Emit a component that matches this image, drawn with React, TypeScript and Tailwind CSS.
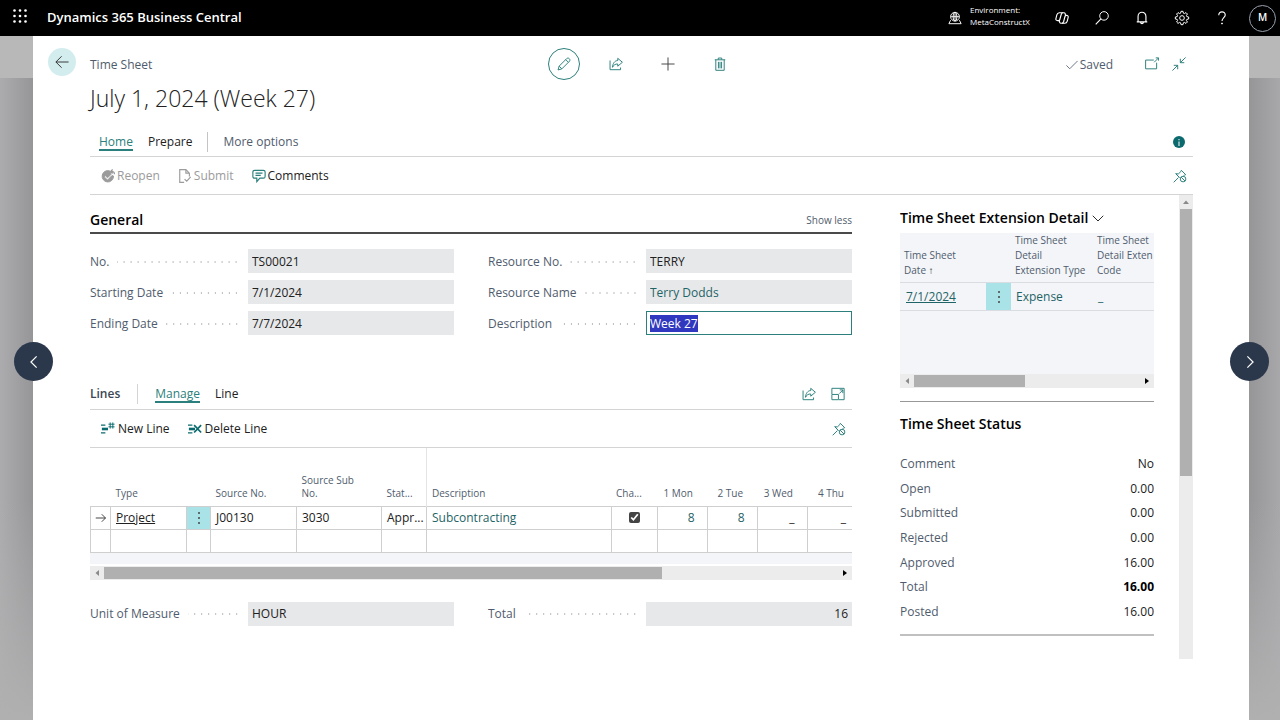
import React, { useEffect, useRef } from 'react'
import clsx from 'clsx'

type IconProps = { className?: string; size?: number; box?: string; children: React.ReactNode }

const Icon = ({ className, size = 14, box = '0 0 16 16', children }: IconProps) => (
    <svg
        width={size}
        height={size}
        viewBox={box}
        fill="none"
        stroke="currentColor"
        strokeWidth="1.1"
        className={clsx('shrink-0', className)}
        aria-hidden="true"
    >
        {children}
    </svg>
)

const ShareIcon = ({ size = 14 }: { size?: number }) => (
    <Icon size={size}>
        <path d="M1.200 4v10.500h12V12" />
        <path d="M10 1.500 15.300 6 10 10.500V8C7.500 7.800 5.200 9 4 11.800c.3-4.500 2.400-7.500 6-7.800z" strokeLinejoin="round" />
    </Icon>
)

const PinIcon = () => (
    <Icon>
        <path d="m9.500 1.500 5 5-1.500.6-1.300 1.200M9.500 1.500l-.6 1.500-2.700 2.600-3-.2L7 9.400M.8 15.200 6.200 9.800M3.200 5.400l4.300 4.500" />
        <circle cx="11.500" cy="11.500" r="3.200" />
        <path d="m9.300 9.300 4.400 4.400" />
    </Icon>
)

const Waffle = () => (
    <svg width="14" height="14" viewBox="0 0 14 14" fill="currentColor" aria-hidden="true">
        {[1.500, 7, 12.500].map(y => [1.500, 7, 12.500].map(x => <circle key={`${x}-${y}`} cx={x} cy={y} r="1.300" />))}
    </svg>
)

const TopBar = () => (
    <header className="flex h-9 shrink-0 items-center bg-black pr-1 pl-[13px] text-white">
        <button aria-label="App launcher" className="pb-1"><Waffle /></button>
        <h2 className="ml-5 flex-1 text-[13px] font-semibold">Dynamics 365 Business Central</h2>
        <Icon size={14} className="mr-2">
            <circle cx="8" cy="6.500" r="5" />
            <ellipse cx="8" cy="6.500" rx="2.200" ry="5" />
            <path d="M3 6.500h10M8 1.500v10M3 10.500 1 14.500h14l-2-4" />
        </Icon>
        <p className="w-[72px] pb-1 text-[8px] leading-3 font-medium">Environment:<br />MetaConstructX</p>
        <button aria-label="Copilot" className="grid w-10 place-items-center">
            <Icon>
                <path d="M6 2h4.200c.8 0 1.200.4 1.500 1.200L12 5h1.200c1.500 0 2.200 1 1.800 2.500l-1 4c-.4 1.600-1.300 2.500-2.800 2.500H6.800c-.8 0-1.200-.4-1.500-1.200L4.800 11H3C1.400 11 .7 10 1.100 8.500l1-4C2.500 2.900 3.400 2 5 2z" strokeWidth="1.300" />
                <path d="M9 2c-1 0-1.500.7-1.800 1.700L5.400 10c-.2.700-.7 1-1.400 1M8 14c1 0 1.500-.7 1.800-1.700L11.500 6c.2-.7.6-1 1.300-1" strokeWidth="1.300" />
            </Icon>
        </button>
        <button aria-label="Search" className="grid w-10 place-items-center">
            <Icon><circle cx="10.300" cy="5.600" r="4.900" /><path d="M6.800 9.100.8 15.200" strokeWidth="1.300" /></Icon>
        </button>
        <button aria-label="Notifications" className="grid w-10 place-items-center">
            <Icon><path d="M2 12.500h12M3.500 12.500V6.200a4.500 4.800 0 0 1 9 0v6.300M6.300 12.700c.2 1.300.8 1.800 1.700 1.800s1.500-.5 1.700-1.800" strokeWidth="1.300" /></Icon>
        </button>
        <button aria-label="Settings" className="grid w-10 place-items-center">
            <Icon size={16} box="0 0 24 24">
                <g strokeWidth="1.500">
                    <circle cx="12" cy="12" r="3.500" />
                    <path d="M10.500 2h3l.6 2.800 1.500.6L18 3.900 20.100 6l-1.500 2.400.6 1.500 2.800.6v3l-2.800.6-.6 1.500 1.500 2.400-2.100 2.100-2.400-1.500-1.500.6-.6 2.800h-3l-.6-2.800-1.500-.6L6 20.100 3.900 18l1.500-2.400-.6-1.500L2 13.500v-3l2.800-.6.6-1.500L3.900 6 6 3.900l2.400 1.500 1.500-.6z" />
                </g>
            </Icon>
        </button>
        <button aria-label="Help" className="grid w-10 place-items-center">
            <Icon><path d="M4.300 4.800C4.300 2.400 5.900 1 8 1s3.700 1.300 3.700 3.500C11.700 7.500 8 7.600 8 11.500" strokeWidth="1.300" /><circle cx="8" cy="14.300" r=".6" fill="currentColor" /></Icon>
        </button>
        <button className="ml-[7px] grid size-[27px] place-items-center rounded-full border border-gray-400 text-[10px] font-semibold">M</button>
    </header>
)

type FieldProps = {
    id: string
    label: string
    value: string
    inputClass?: string
    inputRef?: React.Ref<HTMLInputElement>
}

const Field = ({ id, label, value, inputClass, inputRef }: FieldProps) => (
    <div className="flex h-6 items-center">
        <label htmlFor={id} className="flex w-[158px] shrink-0 items-center gap-2 pt-px pr-2 whitespace-nowrap text-[#505c6d]">
            {label}
            <span className="h-[2px] flex-1 bg-[radial-gradient(circle,#bbbbbb_1px,transparent_1px)] bg-[length:7px_2px] bg-right" />
        </label>
        <input
            id={id}
            ref={inputRef}
            readOnly={!inputRef}
            defaultValue={value}
            className={clsx(
                'h-6 w-full min-w-0 px-1 outline-none selection:bg-[#3038c0] selection:text-white',
                inputRef ? 'border border-[#2b7f7c] bg-white px-[3px]' : 'bg-[#e7e8ea]',
                inputClass ?? 'text-[#212121]'
            )}
        />
    </div>
)

type TabProps = { active?: boolean; muted?: boolean; children: React.ReactNode }

const Tab = ({ active, muted, children }: TabProps) => (
    <button
        className={clsx(
            'border-b-2 pt-px leading-[15px]',
            active ? 'border-[#2b7f7c] text-[#2b7f7c]' : 'border-transparent',
            !active && (muted ? 'text-[#505c6d]' : 'text-[#212121]')
        )}
    >
        {children}
    </button>
)

// Horizontal scrollbar, thumb width in percent of the track
const HScroll = ({ thumb }: { thumb: number }) => (
    <div className="flex h-[14px] items-center bg-[#ececec]">
        <svg width="14" height="14" viewBox="0 0 14 14" className="shrink-0 fill-[#8a8a8a]" aria-hidden="true"><path d="M9 4v6L5.500 7z" /></svg>
        <div className="h-3 flex-1"><div className="h-full bg-[#b0b0b0]" style={{ width: `${thumb}%` }} /></div>
        <svg width="14" height="14" viewBox="0 0 14 14" className="shrink-0 fill-black" aria-hidden="true"><path d="M5 4v6l4-3z" /></svg>
    </div>
)

const MoreDots = () => (
    <button aria-label="More" className="grid h-full w-full place-items-center bg-[#a9e3e8] text-[#444]">
        <svg width="2" height="12" viewBox="0 0 2 12" fill="currentColor" aria-hidden="true">
            <circle cx="1" cy="1" r="1" /><circle cx="1" cy="6" r="1" /><circle cx="1" cy="11" r="1" />
        </svg>
    </button>
)

const LinesTable = () => (
    <table className="w-full table-fixed border-collapse text-left">
        <colgroup>
            <col className="w-5" />
            <col className="w-[76px]" />
            <col className="w-6" />
            <col className="w-[86px]" />
            <col className="w-[85px]" />
            <col className="w-[45px]" />
            <col />
            <col className="w-[46px]" />
            <col className="w-[50px]" />
            <col className="w-[50px]" />
            <col className="w-[50px]" />
            <col className="w-[45px]" />
        </colgroup>
        <thead>
            <tr className="h-[58px] align-bottom text-[10px] leading-[13px] whitespace-nowrap text-[#505c6d] [&>th]:pb-[6px] [&>th]:font-normal">
                <th />
                <th className="pl-[5px]">Type</th>
                <th />
                <th className="pl-[5px]">Source No.</th>
                <th className="pl-[5px]">Source Sub<br />No.</th>
                <th className="border-r border-[#e4e4e4] pl-[5px]">Stat...</th>
                <th className="pl-[5px]">Description</th>
                <th className="pl-[5px]">Cha...</th>
                <th className="pr-[14px] text-right">1 Mon</th>
                <th className="pr-[14px] text-right">2 Tue</th>
                <th className="pr-[14px] text-right">3 Wed</th>
                <th className="pr-2 text-right">4 Thu</th>
            </tr>
        </thead>
        <tbody className="text-[#212121] [&_td]:h-[23px] [&_td]:border [&_td]:border-[#cfcfcf] [&_td]:p-0 [&_td:last-child]:border-r-0">
            <tr>
                <td>
                    <Icon className="mx-auto" size={12}><path d="M1 8h13M9 3l5 5-5 5" /></Icon>
                </td>
                <td><a href="#" className="pl-[5px] underline">Project</a></td>
                <td><div className="h-[22px]"><MoreDots /></div></td>
                <td><span className="pl-[5px]">J00130</span></td>
                <td><span className="pl-[5px]">3030</span></td>
                <td><span className="pl-[5px]">Appr...</span></td>
                <td><a href="#" className="pl-[5px] text-[#1f6466]">Subcontracting</a></td>
                <td>
                    <input
                        type="checkbox"
                        aria-label="Chargeable"
                        defaultChecked
                        className="mx-auto block size-[11px] accent-[#444444]"
                    />
                </td>
                <td className="text-right text-[#1f6466]"><span className="pr-3">8</span></td>
                <td className="text-right text-[#1f6466]"><span className="pr-3">8</span></td>
                <td className="text-right"><span className="pr-3">_</span></td>
                <td className="text-right"><span className="pr-[6px]">_</span></td>
            </tr>
            <tr>
                {Array.from({ length: 12 }, (_, i) => <td key={i} />)}
            </tr>
        </tbody>
    </table>
)

const statusRows = [
    { label: 'Comment', value: 'No' },
    { label: 'Open', value: '0.00' },
    { label: 'Submitted', value: '0.00' },
    { label: 'Rejected', value: '0.00' },
    { label: 'Approved', value: '16.00' },
    { label: 'Total', value: '16.00', bold: true },
    { label: 'Posted', value: '16.00' },
]

const FactBox = () => (
    <aside className="w-[254px] shrink-0 text-[#212121]">
        <h2 className="flex h-[38px] items-center gap-1 pt-[7px] text-sm font-semibold whitespace-nowrap text-black">
            Time Sheet Extension Detail
            <Icon size={12}><path d="m1 5 7 7 7-7" /></Icon>
        </h2>
        <div className="bg-[#f3f5f9]">
            <div className="h-[141px]">
                <table className="w-full table-fixed border-collapse text-left">
                    <colgroup>
                        <col className="w-[86px]" />
                        <col className="w-[25px]" />
                        <col className="w-[82px]" />
                        <col />
                    </colgroup>
                    <thead>
                        <tr className="h-12 align-bottom text-[10px] leading-[15px] whitespace-nowrap text-[#505c6d] [&>th]:p-0 [&>th]:pb-[4px] [&>th]:pl-1 [&>th]:font-normal">
                            <th>Time Sheet<br />Date <span className="font-bold text-[#212121]">↑</span></th>
                            <th />
                            <th>Time Sheet<br />Detail<br />Extension Type</th>
                            <th>Time Sheet<br />Detail Exten<br />Code</th>
                        </tr>
                    </thead>
                    <tbody>
                        <tr className="h-7 border-y border-[#d9dde2] text-[#1f6466]">
                            <td className="pl-[6px]"><a href="#" className="underline">7/1/2024</a></td>
                            <td className="p-0"><div className="h-[27px]"><MoreDots /></div></td>
                            <td className="pl-[5px]">Expense</td>
                            <td className="pl-[5px]">_</td>
                        </tr>
                    </tbody>
                </table>
            </div>
            <HScroll thumb={49} />
        </div>
        <h2 className="mt-[13px] flex h-[43px] items-center border-t border-[#989898] pt-[2px] text-sm font-semibold text-black">Time Sheet Status</h2>
        <dl className="mt-2 grid h-[172px] grid-rows-7">
            {statusRows.map(row => (
                <div key={row.label} className="flex items-center justify-between">
                    <dt className="text-[#505c6d]">{row.label}</dt>
                    <dd className={clsx(row.bold && 'font-bold text-black')}>{row.value}</dd>
                </div>
            ))}
        </dl>
        <hr className="mt-[10px] border-t-2 border-[#c0c0c0]" />
    </aside>
)

const App = () => {
    const descriptionRef = useRef<HTMLInputElement>(null)

    // The description opens focused with its text selected
    useEffect(() => {
        descriptionRef.current?.focus()
        descriptionRef.current?.select()
    }, [])

    return (
        <div className="flex min-h-screen flex-col bg-[#a5a5a9] font-['Open_Sans',sans-serif] text-xs">
            <TopBar />
            <main className="relative flex flex-1 bg-[linear-gradient(#b8b8b8_42px,transparent_42px),linear-gradient(to_top,#b0b0b1,transparent_220px),linear-gradient(to_right,#acacae,#969698_33px,#969698_calc(100%-31px),#a8a8ab)] pr-[31px] pl-[33px]">
                <button aria-label="Previous" className="absolute top-[306px] left-[14px] grid size-[39px] place-items-center rounded-full bg-[#2b384c] text-white">
                    <Icon><path d="M11 1.500 4.500 8l6.500 6.500" strokeWidth="1.400" /></Icon>
                </button>
                <button aria-label="Next" className="absolute top-[306px] right-[11px] grid size-[39px] place-items-center rounded-full bg-[#2b384c] text-white">
                    <Icon><path d="M5 1.500 11.500 8 5 14.500" strokeWidth="1.400" /></Icon>
                </button>

                <section className="flex min-w-0 flex-1 bg-white pt-3 pr-14 pl-[15px]">
                    <div className="w-[42px] shrink-0">
                        <button aria-label="Back" className="grid size-7 place-items-center rounded-full bg-[#d3edef] text-[#333]">
                            <Icon><path d="M15.500 8H1M7.500 1.500 1 8l6.500 6.500" /></Icon>
                        </button>
                    </div>

                    <div className="min-w-0 flex-1">
                        <div className="flex h-8 items-center text-[#2b7f7c]">
                            <span className="flex-1 pt-px text-[#505c6d]">Time Sheet</span>
                            <div className="flex gap-5">
                                <button aria-label="Edit" className="grid size-8 place-items-center rounded-full border border-[#2b7f7c]">
                                    <Icon><path d="m1.200 14.800 1.200-4.300 8.800-8.800c1.900-1.500 4.600 1 3.100 3.100l-8.800 8.800zM2.500 10.500l3 3M10 3l3 3" /></Icon>
                                </button>
                                <button aria-label="Share" className="grid size-8 place-items-center"><ShareIcon /></button>
                                <button aria-label="New" className="grid size-8 place-items-center text-[#444]">
                                    <Icon><path d="M8 .5v15M.5 8h15" /></Icon>
                                </button>
                                <button aria-label="Delete" className="grid size-8 place-items-center">
                                    <Icon><path d="M2 3.200h12M6 3V1.200h4V3M3.200 3.200v12h9.600v-12M6.200 5.500v7.500M8 5.500v7.500M9.800 5.500v7.500" /></Icon>
                                </button>
                            </div>
                            <div className="flex flex-1 items-center justify-end">
                                <span className="flex items-center gap-[2px] pt-px text-[#505c6d]">
                                    <Icon size={12}><path d="m.5 8.500 4.500 4.500L15.500 2.500" /></Icon>
                                    Saved
                                </span>
                                <button aria-label="Open in new window" className="ml-8">
                                    <Icon><path d="M10 3.500H.7v10h12.600V6.500M10.500 6l5-5M12.300 1h3.200v3.200" /></Icon>
                                </button>
                                <button aria-label="Collapse" className="mr-[7px] ml-[13px]">
                                    <Icon><path d="m15.500.5-6 6M9.500 2v4.500H14M.5 15.500l6-6M2 9.500h4.500V14" /></Icon>
                                </button>
                            </div>
                        </div>

                        <h1 className="text-[23px] leading-9 font-light text-[#212121]">July 1, 2024 (Week 27)</h1>

                        <nav className="mt-3 flex h-[29px] items-center gap-[15px] border-b border-[#d4d4d4] pr-2 pl-[9px]">
                            <Tab active>Home</Tab>
                            <Tab>Prepare</Tab>
                            <span className="h-5 w-px bg-[#c4c4c4]" />
                            <Tab muted>More options</Tab>
                            <button aria-label="Details" className="ml-auto grid size-3 place-items-center rounded-full bg-[#0b6a6e] text-white">
                                <svg width="2" height="7" viewBox="0 0 2 7" fill="currentColor" aria-hidden="true"><path d="M.5 0h1v1.200h-1zM.5 2.500h1V7h-1z" /></svg>
                            </button>
                        </nav>
                        <div className="flex h-[38px] items-center border-b border-[#d4d4d4] pt-px pr-[6px] pl-[11px]">
                            <button disabled className="flex items-center gap-[2px] text-[#9b9b9b]">
                                <Icon>
                                    <path d="M10 2.200A6.500 6.500 0 1 0 14.300 8l-1.800-.5L7.500 12.700 3.700 9l1.300-1.300 2.500 2.400 4-4z" fill="currentColor" />
                                    <path d="M15.300 6c.2-2.300-1.200-3.200-4-3.200M13.300.5 11 2.800l2.300 2.300" strokeWidth="1.500" />
                                </Icon>
                                Reopen
                            </button>
                            <button disabled className="ml-[18px] flex items-center gap-[2px] text-[#9b9b9b]">
                                <Icon><path d="M7 15.300H2V.7h7l4 4v3.800M9 .7v4h4M7.500 11.500l2.500 2.500 4.500-5" strokeWidth="1.300" /></Icon>
                                Submit
                            </button>
                            <button className="ml-[18px] flex items-center gap-[2px] text-[#212121]">
                                <Icon className="text-[#2b7f7c]"><path d="M3 1.500h10q2 0 2 2v5q0 2-2 2H9l-3.500 4v-4H3q-2 0-2-2v-5q0-2 2-2zM4 4.700h8M4 7.300h6" strokeWidth="1.300" /></Icon>
                                Comments
                            </button>
                            <button aria-label="Unpin" className="ml-auto text-[#2b7f7c]"><PinIcon /></button>
                        </div>

                        <div className="flex">
                            <div className="min-w-0 flex-1">
                                <div className="flex h-[39px] items-center border-b-2 border-[#4a4a4a] pt-[13px]">
                                    <h2 className="flex-1 text-sm font-semibold text-black">General</h2>
                                    <button className="pt-px text-[10px] text-[#505c6d]">Show less</button>
                                </div>
                                <div className="mt-[15px] grid grid-cols-2 gap-x-[34px] gap-y-[7px]">
                                    <Field id="no" label="No." value="TS00021" />
                                    <Field id="resource-no" label="Resource No." value="TERRY" />
                                    <Field id="start" label="Starting Date" value="7/1/2024" />
                                    <Field id="resource-name" label="Resource Name" value="Terry Dodds" inputClass="text-[#1f6466]" />
                                    <Field id="end" label="Ending Date" value="7/7/2024" />
                                    <Field id="description" label="Description" value="Week 27" inputRef={descriptionRef} />
                                </div>

                                <div className="mt-[43px] flex h-8 items-center border-b border-[#d4d4d4] pr-[7px] text-[#2b7f7c]">
                                    <h2 className="font-semibold text-[#3c4654]">Lines</h2>
                                    <span className="mx-[17px] h-5 w-px bg-[#d4d4d4]" />
                                    <div className="flex gap-[15px]">
                                        <Tab active>Manage</Tab>
                                        <Tab>Line</Tab>
                                    </div>
                                    <button aria-label="Share lines" className="ml-auto"><ShareIcon /></button>
                                    <button aria-label="Expand lines" className="ml-[15px]">
                                        <Icon><path d="M1 8V1.500h14v13H9M1 8.500h7.500v6H1zM9.500 7.500l4-4M10 3.300h3.500V7" /></Icon>
                                    </button>
                                </div>
                                <div className="flex h-[38px] items-center border-b border-[#d4d4d4] pt-px pr-[6px] pl-[11px] text-[#212121]">
                                    <button className="flex items-center gap-[3px]">
                                        <Icon className="text-[#0b6a6e]">
                                            <path d="M0 3.500h5M0 12.500h5" strokeWidth="1.500" />
                                            <path d="M1 8h7" strokeWidth="3" />
                                            <path d="M10.500.5v7M13.500.5v7M8.500 2.500h7M8.500 5.500h7" />
                                        </Icon>
                                        New Line
                                    </button>
                                    <button className="ml-[18px] flex items-center gap-[3px]">
                                        <Icon className="text-[#0b6a6e]">
                                            <path d="M0 3.500h5M0 12.500h5" strokeWidth="1.500" />
                                            <path d="M1 8h7" strokeWidth="3" />
                                            <path d="m7 3.500 8 8.500M15 3.500 7 12" strokeWidth="1.900" />
                                        </Icon>
                                        Delete Line
                                    </button>
                                    <button aria-label="Unpin lines" className="ml-auto text-[#2b7f7c]"><PinIcon /></button>
                                </div>
                                <LinesTable />
                                <div className="mb-[2px] h-[11px] bg-[#f3f5f8]" />
                                <HScroll thumb={76} />
                                <div className="mt-[22px] grid grid-cols-2 gap-x-[34px]">
                                    <Field id="unit" label="Unit of Measure" value="HOUR" />
                                    <Field id="total" label="Total" value="16" inputClass="text-right text-[#212121]" />
                                </div>
                            </div>

                            <div className="ml-12 flex gap-[25px]">
                                <FactBox />
                                <div className="flex h-[464px] w-[14px] flex-col items-center bg-[#ececec]">
                                    <svg width="14" height="14" viewBox="0 0 14 14" className="fill-[#8a8a8a]" aria-hidden="true"><path d="M4 9h6L7 5.500z" /></svg>
                                    <div className="h-[267px] w-3 bg-[#b0b0b0]" />
                                </div>
                            </div>
                        </div>
                    </div>
                </section>
            </main>
        </div>
    )
}

export default App
